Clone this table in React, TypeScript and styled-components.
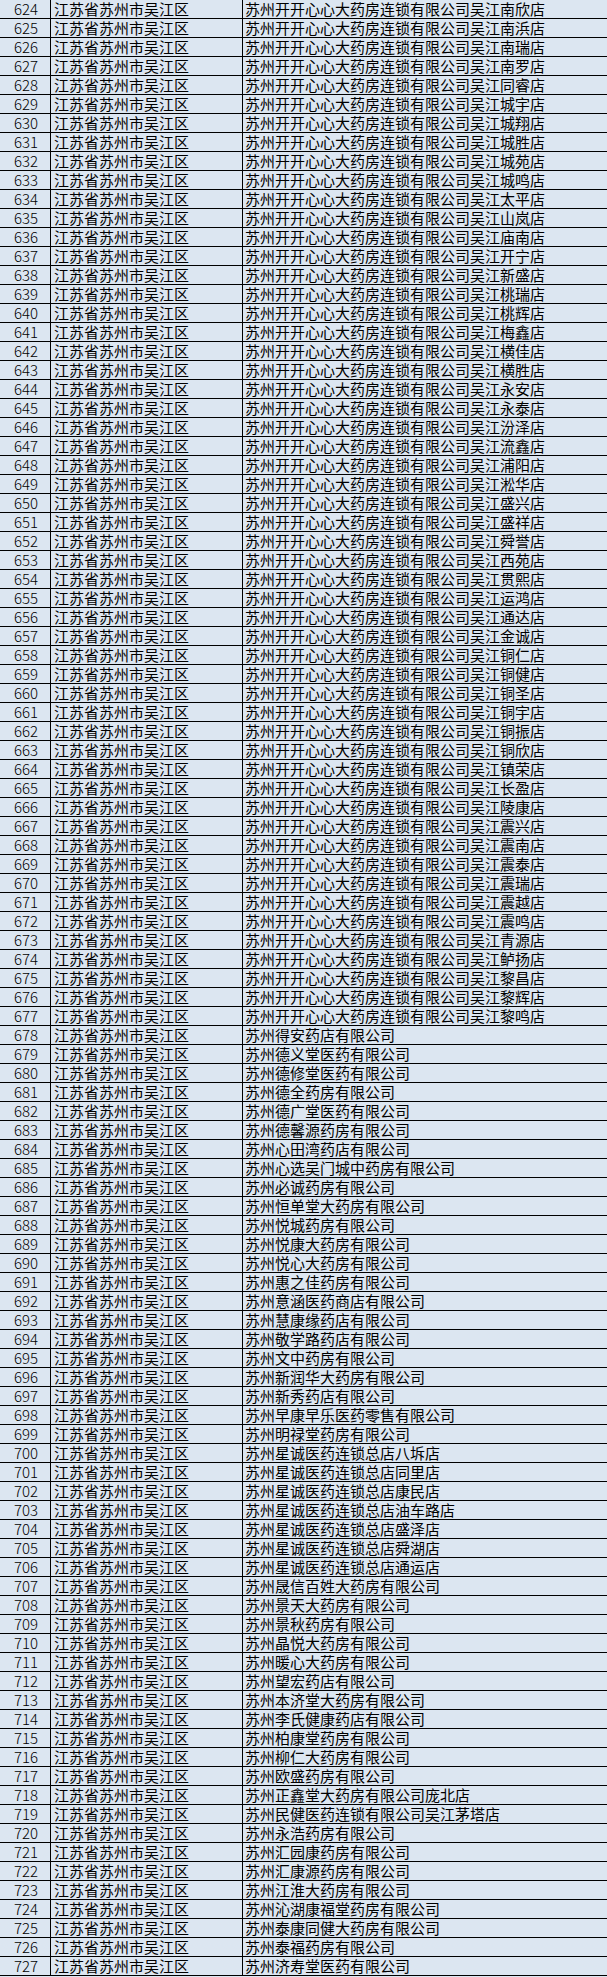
import React from "react";
import styled, { createGlobalStyle } from "styled-components";

const GlobalStyle = createGlobalStyle`
  html, body {
    margin: 0;
    padding: 0;
    background: #dce6f1;
  }
  body {
    font-family: "Noto Sans CJK SC", "Noto Sans", sans-serif;
  }
`;

const PREFIX = "苏州开开心心大药房连锁有限公司吴江";
const chainStores = [
  "南欣", "南浜", "南瑞", "南罗", "同睿", "城宇", "城翔", "城胜", "城苑", "城鸣",
  "太平", "山岚", "庙南", "开宁", "新盛", "桃瑞", "桃辉", "梅鑫", "横佳", "横胜",
  "永安", "永泰", "汾泽", "流鑫", "浦阳", "淞华", "盛兴", "盛祥", "舜誉", "西苑",
  "贯熙", "运鸿", "通达", "金诚", "铜仁", "铜健", "铜圣", "铜宇", "铜振", "铜欣",
  "镇荣", "长盈", "陵康", "震兴", "震南", "震泰", "震瑞", "震越", "震鸣", "青源",
  "鲈扬", "黎昌", "黎辉", "黎鸣",
].map((s) => `${PREFIX}${s}店`);

const others = [
  "苏州得安药店有限公司",
  "苏州德义堂医药有限公司",
  "苏州德修堂医药有限公司",
  "苏州德全药房有限公司",
  "苏州德广堂医药有限公司",
  "苏州德馨源药房有限公司",
  "苏州心田湾药店有限公司",
  "苏州心选吴门城中药房有限公司",
  "苏州必诚药房有限公司",
  "苏州恒单堂大药房有限公司",
  "苏州悦城药房有限公司",
  "苏州悦康大药房有限公司",
  "苏州悦心大药房有限公司",
  "苏州惠之佳药房有限公司",
  "苏州意涵医药商店有限公司",
  "苏州慧康缘药店有限公司",
  "苏州敬学路药店有限公司",
  "苏州文中药房有限公司",
  "苏州新润华大药房有限公司",
  "苏州新秀药店有限公司",
  "苏州早康早乐医药零售有限公司",
  "苏州明禄堂药房有限公司",
  "苏州星诚医药连锁总店八坼店",
  "苏州星诚医药连锁总店同里店",
  "苏州星诚医药连锁总店康民店",
  "苏州星诚医药连锁总店油车路店",
  "苏州星诚医药连锁总店盛泽店",
  "苏州星诚医药连锁总店舜湖店",
  "苏州星诚医药连锁总店通运店",
  "苏州晟信百姓大药房有限公司",
  "苏州景天大药房有限公司",
  "苏州景秋药房有限公司",
  "苏州晶悦大药房有限公司",
  "苏州暖心大药房有限公司",
  "苏州望宏药店有限公司",
  "苏州本济堂大药房有限公司",
  "苏州李氏健康药店有限公司",
  "苏州柏康堂药房有限公司",
  "苏州柳仁大药房有限公司",
  "苏州欧盛药房有限公司",
  "苏州正鑫堂大药房有限公司庞北店",
  "苏州民健医药连锁有限公司吴江茅塔店",
  "苏州永浩药房有限公司",
  "苏州汇园康药房有限公司",
  "苏州汇康源药房有限公司",
  "苏州江淮大药房有限公司",
  "苏州沁湖康福堂药房有限公司",
  "苏州泰康同健大药房有限公司",
  "苏州泰福药房有限公司",
  "苏州济寿堂医药有限公司",
];

const names = [...chainStores, ...others];
const rows = names.map((name, i) => ({
  no: 624 + i,
  region: "江苏省苏州市吴江区",
  name,
}));

const Sheet = styled.div`
  width: 607px;
  background: #dce6f1;
  color: #000;
`;

const Row = styled.div`
  display: grid;
  grid-template-columns: 51px 192px 1fr;
  height: 19px;
  box-sizing: border-box;
  border-bottom: 1px solid #000;
`;

const Cell = styled.div<{ $align?: "center" | "left"; $last?: boolean; $pad?: number }>`
  box-sizing: border-box;
  height: 18px;
  border-right: ${(p) => (p.$last ? "none" : "1px solid #000")};
  display: flex;
  align-items: flex-end;
  justify-content: ${(p) => (p.$align === "center" ? "center" : "flex-start")};
  padding-left: ${(p) => p.$pad ?? 0}px;
  font-family: "Noto Sans CJK SC", "Noto Sans", sans-serif;
  font-size: 15px;
  line-height: 18px;
  white-space: nowrap;
`;

const Num = styled.span`
  font-family: "Noto Sans CJK SC", "Noto Sans", sans-serif;
  font-size: 15px;
  font-weight: 300;
  padding-left: 2px;
`;

export default function App() {
  return (
    <>
      <GlobalStyle />
      <Sheet>
        {rows.map((r) => (
          <Row key={r.no}>
            <Cell $align="center">
              <Num>{r.no}</Num>
            </Cell>
            <Cell $pad={3}>{r.region}</Cell>
            <Cell $pad={2} $last>
              {r.name}
            </Cell>
          </Row>
        ))}
      </Sheet>
    </>
  );
}
